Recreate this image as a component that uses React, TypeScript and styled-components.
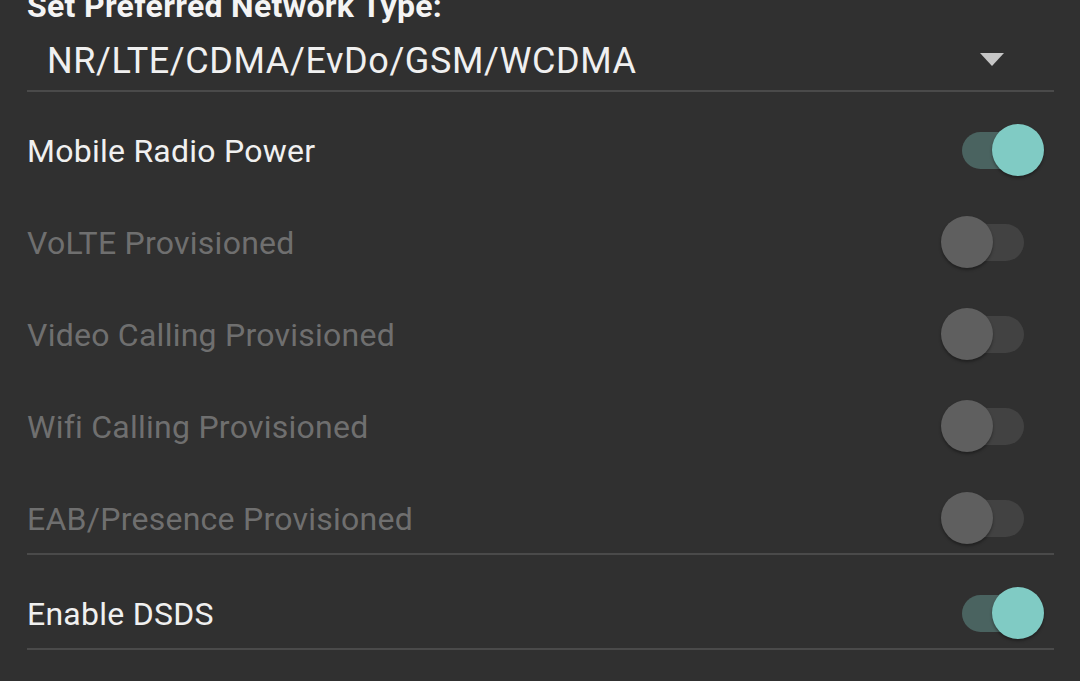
import React from "react";
import styled, { createGlobalStyle } from "styled-components";

const Global = createGlobalStyle`
  html, body { margin: 0; padding: 0; background: #303030; }
  body {
    font-family: Roboto, "Noto Sans", sans-serif;
    font-variant-ligatures: none;
    overflow: hidden;
  }
`;

const Page = styled.div`
  width: 1080px;
  height: 681px;
  background: #303030;
  box-sizing: border-box;
  padding: 0 26px 0 27px;
  overflow: hidden;
`;

const Title = styled.div`
  margin-top: -10px;
  font-size: 32px;
  line-height: 32px;
  font-weight: 700;
  letter-spacing: 0.3px;
  color: #f4f4f4;
  white-space: nowrap;
`;

const DropdownRow = styled.div`
  display: flex;
  align-items: center;
  justify-content: space-between;
  padding: 21px 50px 11px 20px;
`;

const DropdownText = styled.span`
  font-size: 36px;
  line-height: 36px;
  letter-spacing: 0.6px;
  color: #f0f0f0;
`;

const Arrow = styled.span`
  width: 0;
  height: 0;
  border-left: 12.5px solid transparent;
  border-right: 12.5px solid transparent;
  border-top: 13px solid #c6c6c6;
  margin-bottom: 3px;
`;

const Divider = styled.div`
  height: 2px;
  background: #4a4a4a;
`;

const Section = styled.div`
  display: flex;
  flex-direction: column;
  gap: 22px;
  padding-top: 23px;
`;

const Row = styled.div`
  height: 70px;
  display: flex;
  align-items: center;
  justify-content: space-between;
  padding-right: 10px;
`;

const Label = styled.span<{ $disabled?: boolean }>`
  font-size: 32px;
  padding-top: 2px;
  letter-spacing: 0.25px;
  color: ${(p) => (p.$disabled ? "#6f6f6f" : "#f0f0f0")};
  white-space: nowrap;
`;

const SwitchBox = styled.div`
  position: relative;
  width: 103px;
  height: 52px;
  flex: none;
`;

const Track = styled.div<{ $on: boolean }>`
  position: absolute;
  left: 21px;
  top: 7.5px;
  width: 62px;
  height: 37px;
  border-radius: 18.5px;
  background: ${(p) => (p.$on ? "#4a6360" : "#424242")};
`;

const Thumb = styled.div<{ $on: boolean }>`
  position: absolute;
  top: 0;
  left: ${(p) => (p.$on ? "51px" : "0")};
  width: 52px;
  height: 52px;
  border-radius: 50%;
  background: ${(p) => (p.$on ? "#80cbc4" : "#5f5f5f")};
  box-shadow: 0 2px 3px rgba(0, 0, 0, 0.35);
`;

const Switch: React.FC<{ on: boolean }> = ({ on }) => (
  <SwitchBox>
    <Track $on={on} />
    <Thumb $on={on} />
  </SwitchBox>
);

const rows = [
  { label: "Mobile Radio Power", on: true, disabled: false },
  { label: "VoLTE Provisioned", on: false, disabled: true },
  { label: "Video Calling Provisioned", on: false, disabled: true },
  { label: "Wifi Calling Provisioned", on: false, disabled: true },
  { label: "EAB/Presence Provisioned", on: false, disabled: true },
];

export default function App() {
  return (
    <Page>
      <Global />
      <Title>Set Preferred Network Type:</Title>
      <DropdownRow>
        <DropdownText>NR/LTE/CDMA/EvDo/GSM/WCDMA</DropdownText>
        <Arrow />
      </DropdownRow>
      <Divider />
      <Section>
        {rows.map((r) => (
          <Row key={r.label}>
            <Label $disabled={r.disabled}>{r.label}</Label>
            <Switch on={r.on} />
          </Row>
        ))}
      </Section>
      <Divider />
      <Section>
        <Row>
          <Label>Enable DSDS</Label>
          <Switch on={true} />
        </Row>
      </Section>
      <Divider />
    </Page>
  );
}
